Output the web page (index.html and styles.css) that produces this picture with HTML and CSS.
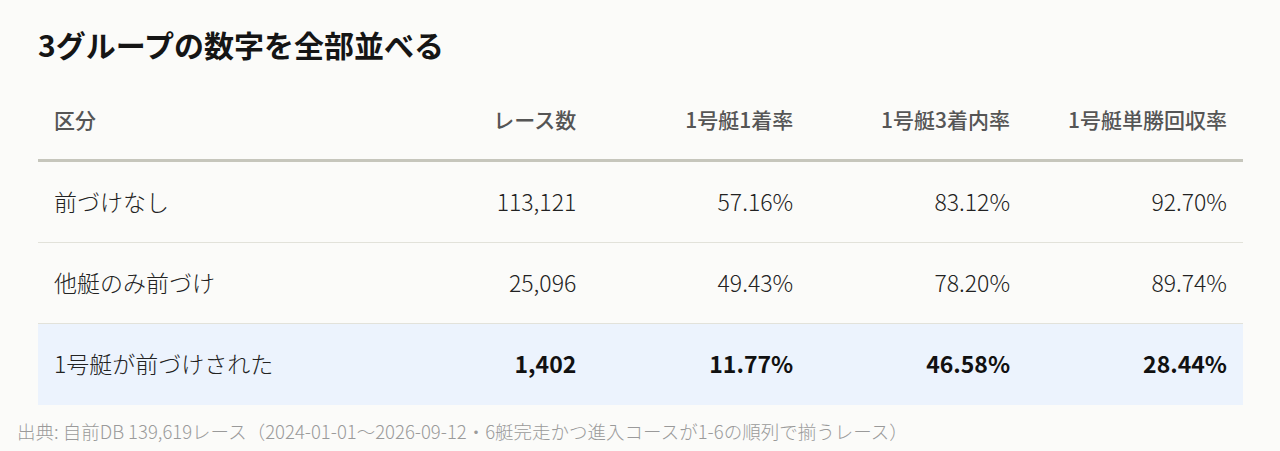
FILE: index.html
```html
<!DOCTYPE html>
<html lang="ja">
<head>
<meta charset="utf-8">
<link rel="stylesheet" href="styles.css">
</head>
<body>
<main class="page">
  <section class="panel">
    <h1 class="title">3グループの数字を全部並べる</h1>
    <table class="stats">
      <colgroup>
        <col class="col-label">
        <col class="col-num">
        <col class="col-num">
        <col class="col-num">
        <col class="col-num">
      </colgroup>
      <thead>
        <tr>
          <th class="left">区分</th>
          <th>レース数</th>
          <th>1号艇1着率</th>
          <th>1号艇3着内率</th>
          <th>1号艇単勝回収率</th>
        </tr>
      </thead>
      <tbody>
        <tr>
          <td class="left">前づけなし</td>
          <td>113,121</td>
          <td>57.16%</td>
          <td>83.12%</td>
          <td>92.70%</td>
        </tr>
        <tr>
          <td class="left">他艇のみ前づけ</td>
          <td>25,096</td>
          <td>49.43%</td>
          <td>78.20%</td>
          <td>89.74%</td>
        </tr>
        <tr class="highlight">
          <td class="left">1号艇が前づけされた</td>
          <td>1,402</td>
          <td>11.77%</td>
          <td>46.58%</td>
          <td>28.44%</td>
        </tr>
      </tbody>
    </table>
  </section>
  <p class="source">出典: 自前DB 139,619レース（2024-01-01〜2026-09-12・6艇完走かつ進入コースが1-6の順列で揃うレース）</p>
</main>
</body>
</html>
```

FILE: styles.css
```css
html, body {
  margin: 0;
  padding: 0;
  background: #fbfbf9;
}

body {
  font-family: "Noto Sans CJK JP", "Noto Sans", sans-serif;
  color: #222;
}

.page {
  padding: 24px 0 0 17px;
}

.panel {
  padding-left: 21px;
  width: 1205px;
}

.title {
  margin: 0 0 15px;
  font-size: 30px;
  line-height: 40px;
  font-weight: 700;
  color: #151515;
}

.stats {
  width: 1205px;
  border-collapse: collapse;
  table-layout: fixed;
}

.col-label { width: 28%; }
.col-num { width: 18%; }

.stats th {
  font-size: 21px;
  line-height: 30px;
  font-weight: 500;
  color: #555;
  padding: 25px 16px;
  text-align: right;
  border-bottom: 3px solid #c6c6bc;
  white-space: nowrap;
}

.stats td {
  font-size: 23px;
  line-height: 32px;
  font-weight: 300;
  color: #222;
  padding: 23px 16px 25px;
  text-align: right;
  border-bottom: 1px solid #e2e2da;
  white-space: nowrap;
}

.stats .left {
  text-align: left;
}

.stats tr.highlight td {
  background: #ecf3fd;
  font-weight: 700;
  color: #111;
  border-bottom: none;
  padding-bottom: 26px;
}

.stats tr.highlight td.left {
  font-weight: 300;
  color: #222;
}

.source {
  margin: 14px 0 0;
  font-size: 18.5px;
  line-height: 24px;
  font-weight: 300;
  color: #9a9a9a;
}
```
